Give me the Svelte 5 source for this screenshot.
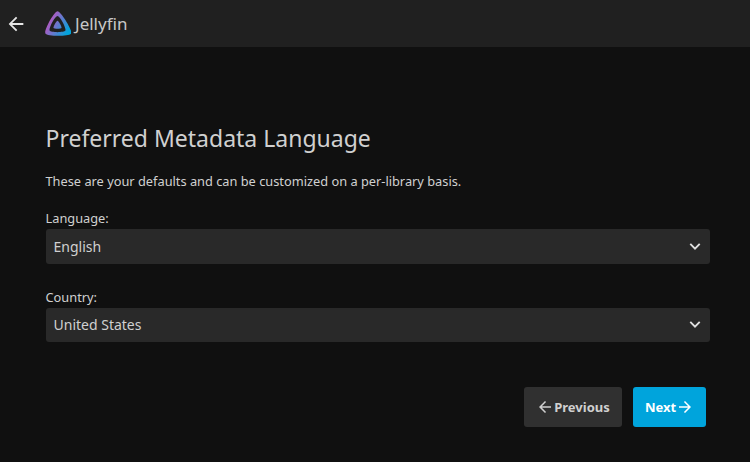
<script lang="ts">
	const fields = [
		{ label: 'Language:', value: 'English' },
		{ label: 'Country:', value: 'United States' }
	];
</script>

<div class="page">
	<header class="topbar">
		<button class="back" aria-label="Back">
			<svg viewBox="0 0 24 24" width="22" height="22"><path d="M20 11H7.83l5.59-5.59L12 4l-8 8 8 8 1.41-1.41L7.83 13H20v-2z" fill="currentColor" /></svg>
		</button>
		<svg class="logo" viewBox="0 0 512 512" width="27" height="27">
			<defs>
				<linearGradient id="jf" gradientUnits="userSpaceOnUse" x1="110" y1="219" x2="460" y2="411">
					<stop offset="0" stop-color="#aa5cc3" />
					<stop offset="1" stop-color="#00a4dc" />
				</linearGradient>
			</defs>
			<path fill="url(#jf)" d="M256 201.6c-20.4 0-86.2 119.3-76.2 139.4s142.5 19.9 152.4 0S276.5 201.6 256 201.6z" />
			<path fill="url(#jf)" d="M256 23.3c-61.6 0-259.8 359.4-229.6 420.1s459.8 60 489.3 0S317.6 23.3 256 23.3zm150.5 367.8c-19.8 39.3-280.7 39.8-300.8 0s102.3-276.3 150.3-276.3 170.5 237.1 150.6 276.3z" />
		</svg>
		<span class="brand">Jellyfin</span>
	</header>

	<main class="content">
		<h1>Preferred Metadata Language</h1>
		<p class="hint">These are your defaults and can be customized on a per-library basis.</p>

		{#each fields as field}
			<div class="field">
				<div class="label">{field.label}</div>
				<div class="select">
					<span>{field.value}</span>
					<svg viewBox="0 0 14 10" width="12" height="9"><path d="M1.5 2l5.5 5.5L12.5 2" fill="none" stroke="currentColor" stroke-width="2.2" /></svg>
				</div>
			</div>
		{/each}

		<div class="actions">
			<button class="btn prev">
				<svg viewBox="0 0 24 24" width="18" height="18"><path d="M20 11H7.83l5.59-5.59L12 4l-8 8 8 8 1.41-1.41L7.83 13H20v-2z" fill="currentColor" /></svg>
				Previous
			</button>
			<button class="btn next">
				Next
				<svg viewBox="0 0 24 24" width="18" height="18"><path d="M4 11h12.17l-5.59-5.59L12 4l8 8-8 8-1.41-1.41L16.17 13H4v-2z" fill="currentColor" /></svg>
			</button>
		</div>
	</main>
</div>

<style>
	:global(body) {
		background: #101010;
		font-family: 'Noto Sans', sans-serif;
	}

	.page {
		height: 462px;
		overflow: hidden;
		color: #d0d0d0;
	}

	.topbar {
		height: 47px;
		display: flex;
		align-items: center;
		background: #202020;
		padding-left: 5px;
	}

	.back {
		display: flex;
		padding: 0;
		background: none;
		border: 0;
		color: #e6e6e6;
	}

	.logo {
		margin-left: 17px;
	}

	.brand {
		margin-left: 4px;
		font-size: 17px;
		color: #c8c8c8;
	}

	.content {
		padding: 76px 40px 0 45.5px;
	}

	h1 {
		margin: 0;
		font-size: 23px;
		font-weight: 400;
		line-height: 30px;
		color: #d0d0d0;
	}

	.hint {
		margin: 19px 0 0;
		font-size: 12.8px;
		line-height: 18px;
	}

	.field {
		margin-top: 19px;
	}

	.field + .field {
		margin-top: 24px;
	}

	.label {
		font-size: 12.8px;
		line-height: 18px;
		margin-bottom: 2px;
	}

	.select {
		height: 34.5px;
		display: flex;
		align-items: center;
		justify-content: space-between;
		padding: 0 9px 0 8px;
		background: #292929;
		border-radius: 3px;
		font-size: 14px;
	}

	.select svg {
		color: #e0e0e0;
	}

	.actions {
		display: flex;
		justify-content: flex-end;
		gap: 11px;
		margin-top: 45px;
		padding-right: 4px;
	}

	.btn {
		height: 40px;
		display: flex;
		align-items: center;
		justify-content: center;
		padding: 0;
		border: 0;
		border-radius: 3px;
		font-family: inherit;
		font-size: 13px;
		font-weight: 700;
	}

	.prev {
		width: 98px;
		background: #303030;
		color: #d0d0d0;
	}

	.next {
		width: 73px;
		background: #00a4dc;
		color: #fff;
	}
</style>
